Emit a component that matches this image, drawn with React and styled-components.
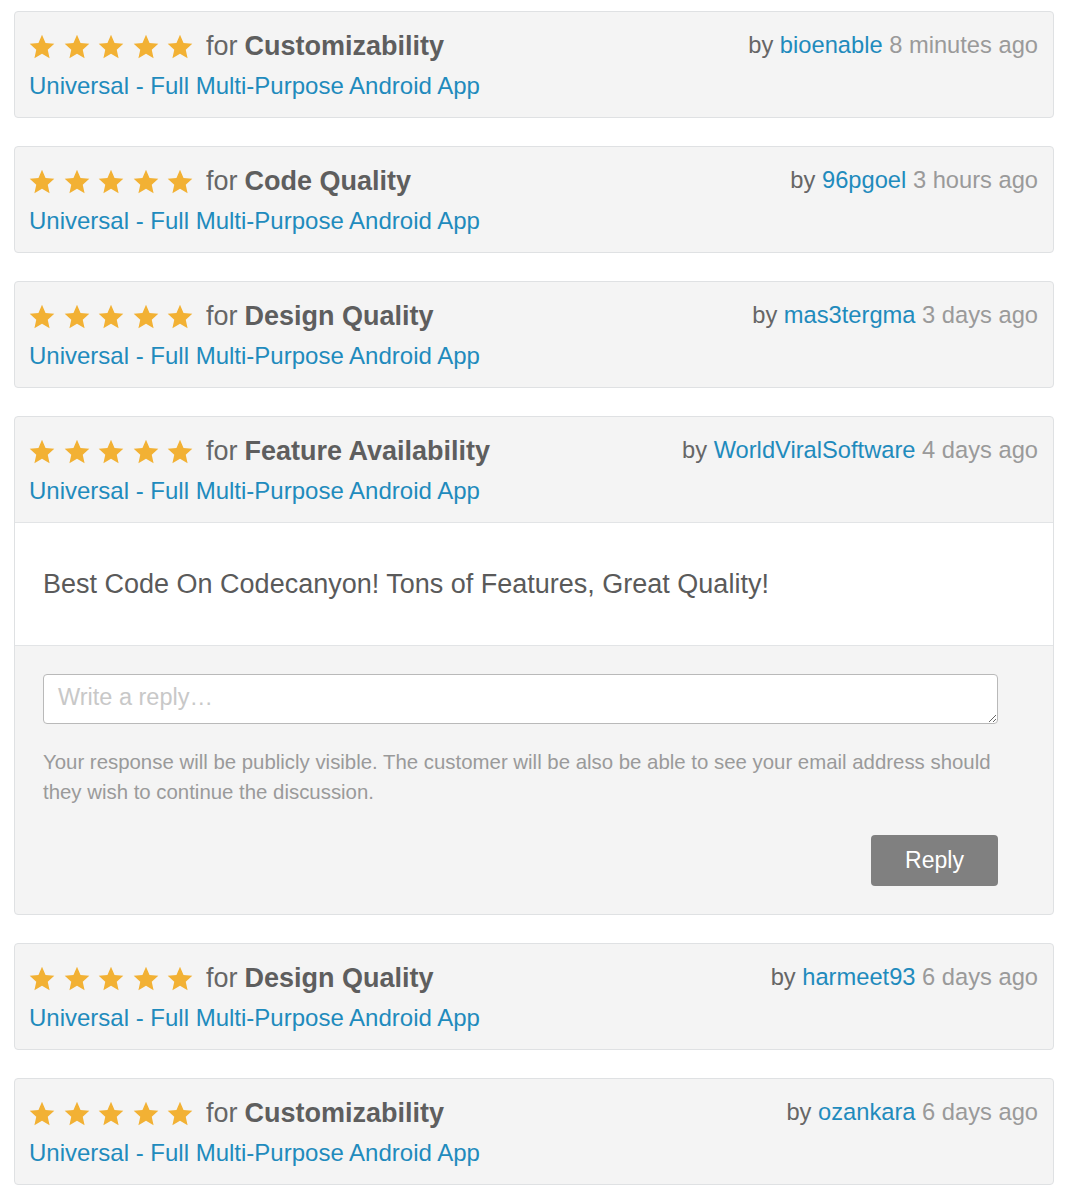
import React from 'react';
import styled, { createGlobalStyle } from 'styled-components';

const GlobalStyle = createGlobalStyle`
  body {
    margin: 0;
    background: #ffffff;
    font-family: 'Liberation Sans', Arial, sans-serif;
  }
`;

const Page = styled.div`
  padding: 11px 14px 20px 14px;
  display: flex;
  flex-direction: column;
  gap: 28px;
  width: 1040px;
`;

const Card = styled.div`
  background: #f4f4f4;
  border: 1px solid #dfe1e3;
  border-radius: 4px;
  overflow: hidden;
`;

const Header = styled.div`
  display: flex;
  justify-content: space-between;
  align-items: flex-start;
  padding: 16px 15px 13px 14px;
`;

const Left = styled.div`
  display: flex;
  flex-direction: column;
  gap: 4px;
`;

const TitleRow = styled.div`
  display: flex;
  align-items: center;
  height: 36px;
  font-size: 27px;
  color: #666666;
`;

const Stars = styled.div`
  display: flex;
  gap: 8.5px;
  margin-right: 13px;
`;

const Criterion = styled.b`
  margin-left: 7px;
  color: #5e5e5e;
`;

const ItemLink = styled.a`
  font-size: 24px;
  line-height: 36px;
  color: #1f8bbd;
  text-decoration: none;
`;

const Meta = styled.div`
  font-size: 23.7px;
  line-height: 34px;
  color: #666666;
  white-space: nowrap;
`;

const User = styled.a`
  color: #1f8bbd;
  text-decoration: none;
`;

const When = styled.span`
  color: #9a9a9a;
`;

const Body = styled.div`
  background: #ffffff;
  border-top: 1px solid #e2e4e6;
  border-bottom: 1px solid #e2e4e6;
  padding: 43px 28px;
  font-size: 27px;
  line-height: 36px;
  color: #5a5a5a;
`;

const ReplyArea = styled.div`
  padding: 28px 55px 28px 28px;
  display: flex;
  flex-direction: column;
`;

const ReplyBox = styled.textarea`
  box-sizing: border-box;
  width: 100%;
  height: 50px;
  border: 1px solid #b9b9b9;
  border-radius: 4px;
  padding: 9px 14px;
  font-family: 'Liberation Sans', Arial, sans-serif;
  font-size: 23.5px;
  color: #555;
  resize: vertical;
  background: #fff;

  &::placeholder {
    color: #c8c8c8;
  }
`;

const Note = styled.p`
  margin: 23px 0 28px 0;
  font-size: 20.4px;
  line-height: 30px;
  color: #9a9a9a;
`;

const ButtonRow = styled.div`
  display: flex;
  justify-content: flex-end;
`;

const ReplyButton = styled.button`
  width: 127px;
  height: 51px;
  border: none;
  border-radius: 4px;
  background: #808080;
  color: #ffffff;
  font-family: 'Liberation Sans', Arial, sans-serif;
  font-size: 23px;
  cursor: pointer;
`;

function Star() {
  return (
    <svg width="26" height="25" viewBox="0 0 24 23.2">
      <polygon
        points="12,0.8 15.29,8.27 23.41,9.09 17.33,14.53 19.05,22.51 12,18.4 4.95,22.51 6.67,14.53 0.59,9.09 8.71,8.27"
        fill="#f2b134"
      />
    </svg>
  );
}

function ReviewHeader({ criterion, user, when }) {
  return (
    <Header>
      <Left>
        <TitleRow>
          <Stars>
            {[0, 1, 2, 3, 4].map((i) => (
              <Star key={i} />
            ))}
          </Stars>
          for<Criterion>{criterion}</Criterion>
        </TitleRow>
        <ItemLink href="#">Universal - Full Multi-Purpose Android App</ItemLink>
      </Left>
      <Meta>
        by <User href="#">{user}</User> <When>{when}</When>
      </Meta>
    </Header>
  );
}

const reviews = [
  { criterion: 'Customizability', user: 'bioenable', when: '8 minutes ago' },
  { criterion: 'Code Quality', user: '96pgoel', when: '3 hours ago' },
  { criterion: 'Design Quality', user: 'mas3tergma', when: '3 days ago' },
  {
    criterion: 'Feature Availability',
    user: 'WorldViralSoftware',
    when: '4 days ago',
    text: 'Best Code On Codecanyon! Tons of Features, Great Quality!',
  },
  { criterion: 'Design Quality', user: 'harmeet93', when: '6 days ago' },
  { criterion: 'Customizability', user: 'ozankara', when: '6 days ago' },
];

export default function App() {
  return (
    <>
      <GlobalStyle />
      <Page>
        {reviews.map((r, i) => (
          <Card key={i}>
            <ReviewHeader criterion={r.criterion} user={r.user} when={r.when} />
            {r.text && (
              <>
                <Body>{r.text}</Body>
                <ReplyArea>
                  <ReplyBox placeholder="Write a reply…" />
                  <Note>
                    Your response will be publicly visible. The customer will be also be able to see
                    your email address should they wish to continue the discussion.
                  </Note>
                  <ButtonRow>
                    <ReplyButton>Reply</ReplyButton>
                  </ButtonRow>
                </ReplyArea>
              </>
            )}
          </Card>
        ))}
      </Page>
    </>
  );
}
